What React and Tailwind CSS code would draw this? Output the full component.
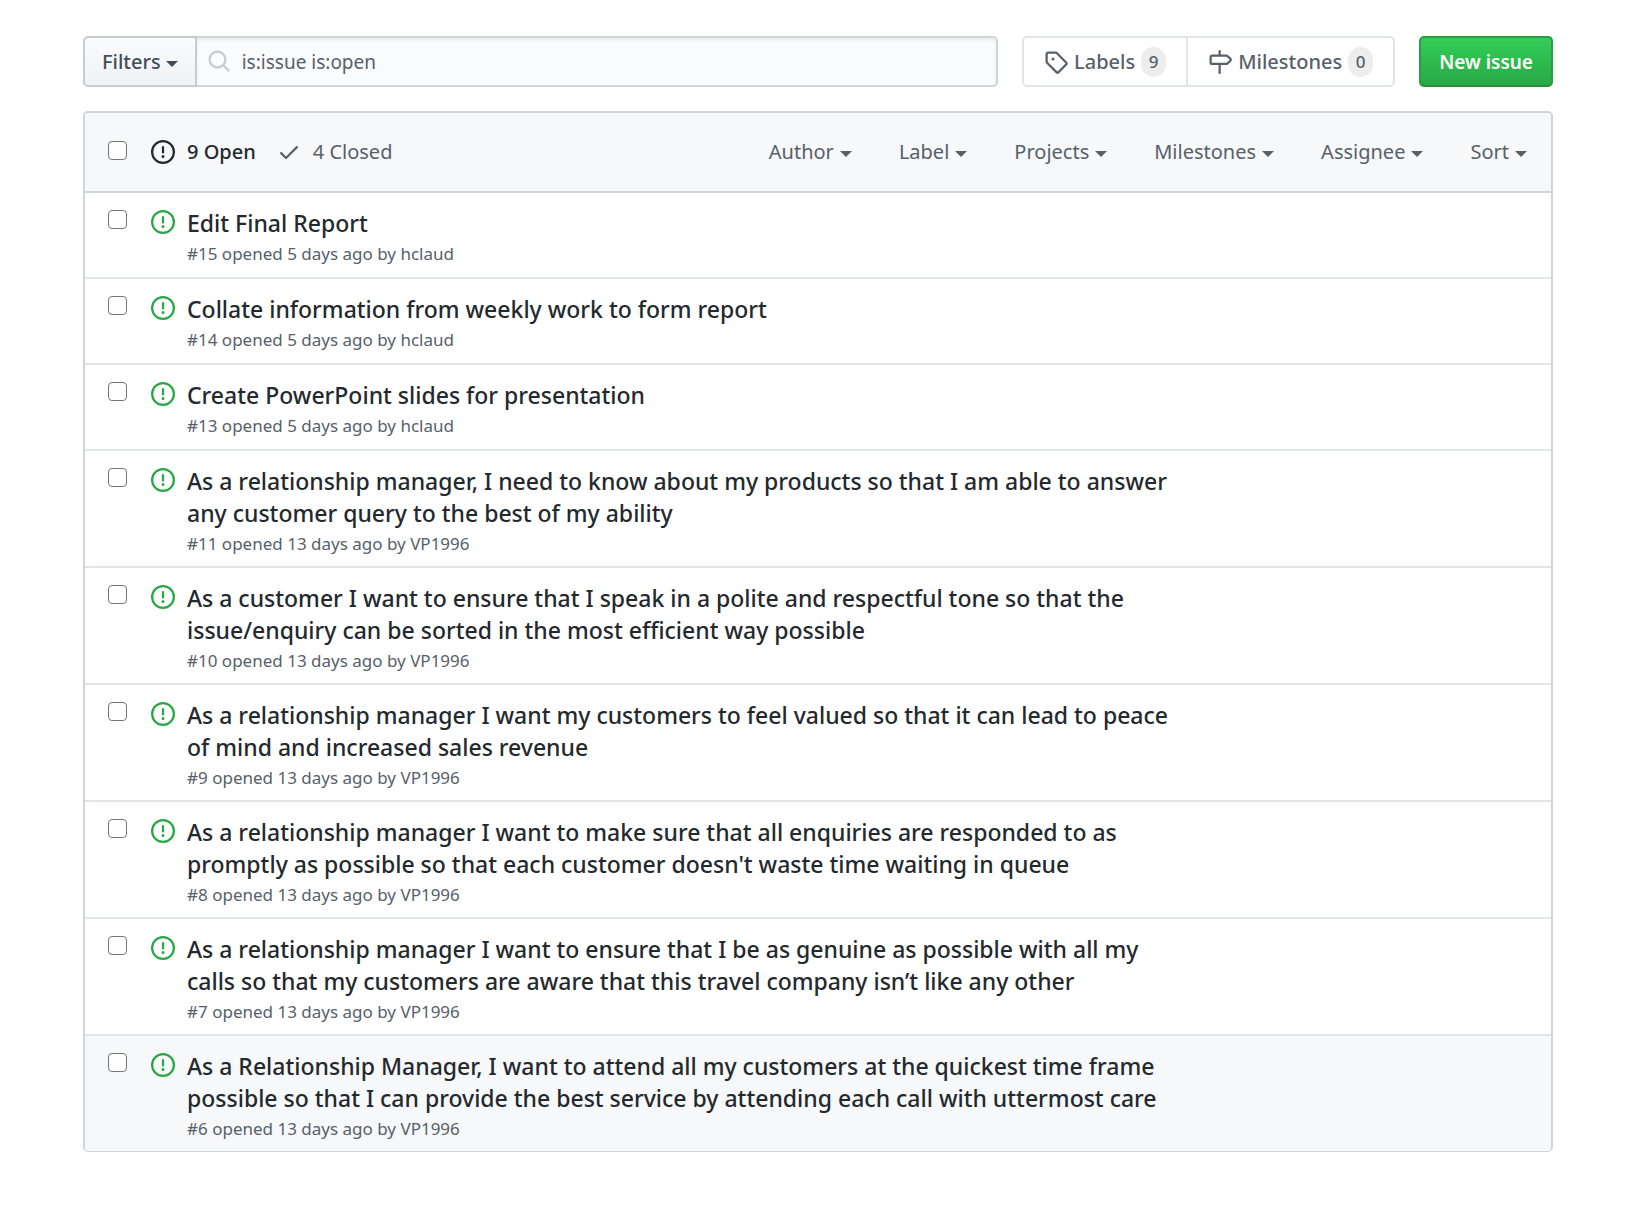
const ICONS = {
  issue:
    "M8 1.5a6.5 6.5 0 100 13 6.5 6.5 0 000-13zM0 8a8 8 0 1116 0A8 8 0 010 8zm9 3a1 1 0 11-2 0 1 1 0 012 0zm-.25-6.25a.75.75 0 00-1.5 0v3.5a.75.75 0 001.5 0v-3.5z",
  check:
    "M13.78 4.22a.75.75 0 010 1.06l-7.25 7.25a.75.75 0 01-1.06 0L2.22 9.28a.75.75 0 011.06-1.06L6 10.94l6.72-6.72a.75.75 0 011.06 0z",
  search:
    "M11.5 7a4.499 4.499 0 11-8.998 0A4.499 4.499 0 0111.5 7zm-.82 4.74a6 6 0 111.06-1.06l3.04 3.04a.75.75 0 11-1.06 1.06l-3.04-3.04z",
  tag: "M2.5 7.775V2.75a.25.25 0 01.25-.25h5.025a.25.25 0 01.177.073l6.25 6.25a.25.25 0 010 .354l-5.025 5.025a.25.25 0 01-.354 0l-6.25-6.25a.25.25 0 01-.073-.177zm-1.5 0V2.75C1 1.784 1.784 1 2.75 1h5.025c.464 0 .91.184 1.238.513l6.25 6.25a1.75 1.75 0 010 2.474l-5.026 5.026a1.75 1.75 0 01-2.474 0l-6.25-6.25A1.75 1.75 0 011 7.775zM6 5a1 1 0 100 2 1 1 0 000-2z",
  milestone:
    "M7.75 0a.75.75 0 01.75.75V3h3.634c.414 0 .814.147 1.13.414l2.07 1.75a1.75 1.75 0 010 2.672l-2.07 1.75a1.75 1.75 0 01-1.13.414H8.5v5.25a.75.75 0 11-1.5 0V10H2.75A1.75 1.75 0 011 8.25v-3.5C1 3.784 1.784 3 2.75 3H7V.75A.75.75 0 017.75 0zm0 8.5h4.384a.25.25 0 00.161-.06l2.07-1.75a.25.25 0 000-.38l-2.07-1.75a.25.25 0 00-.161-.06H2.75a.25.25 0 00-.25.25v3.5c0 .138.112.25.25.25h5z",
};

const MENUS = ["Author", "Label", "Projects", "Milestones", "Assignee", "Sort"];

const ISSUES = [
  { id: 15, days: 5, by: "hclaud", title: "Edit Final Report" },
  { id: 14, days: 5, by: "hclaud", title: "Collate information from weekly work to form report" },
  { id: 13, days: 5, by: "hclaud", title: "Create PowerPoint slides for presentation" },
  {
    id: 11,
    days: 13,
    by: "VP1996",
    title:
      "As a relationship manager, I need to know about my products so that I am able to answer any customer query to the best of my ability",
  },
  {
    id: 10,
    days: 13,
    by: "VP1996",
    title:
      "As a customer I want to ensure that I speak in a polite and respectful tone so that the issue/enquiry can be sorted in the most efficient way possible",
  },
  {
    id: 9,
    days: 13,
    by: "VP1996",
    title:
      "As a relationship manager I want my customers to feel valued so that it can lead to peace of mind and increased sales revenue",
  },
  {
    id: 8,
    days: 13,
    by: "VP1996",
    title:
      "As a relationship manager I want to make sure that all enquiries are responded to as promptly as possible so that each customer doesn't waste time waiting in queue",
  },
  {
    id: 7,
    days: 13,
    by: "VP1996",
    title:
      "As a relationship manager I want to ensure that I be as genuine as possible with all my calls so that my customers are aware that this travel company isn’t like any other",
  },
  {
    id: 6,
    days: 13,
    by: "VP1996",
    title:
      "As a Relationship Manager, I want to attend all my customers at the quickest time frame possible so that I can provide the best service by attending each call with uttermost care",
    hovered: true,
  },
];

function Icon({ name, className = "" }) {
  return (
    <svg viewBox="0 0 16 16" aria-hidden="true" fill="currentColor" fillRule="evenodd" className={`size-6 shrink-0 ${className}`}>
      <path d={ICONS[name]} />
    </svg>
  );
}

function Caret() {
  return <span aria-hidden="true" className="mt-1 border-x-6 border-t-6 border-x-transparent border-t-current" />;
}

function Checkbox({ label }) {
  return (
    <input
      type="checkbox"
      aria-label={label}
      className="size-[19px] shrink-0 appearance-none rounded-[4px] border border-[#767676] bg-white checked:bg-[#0366d6]"
    />
  );
}

function Counter({ children }) {
  return (
    <span className="flex h-[30px] min-w-[25px] items-center justify-center rounded-full bg-[#ededed] text-[17px]">
      {children}
    </span>
  );
}

function Toolbar() {
  return (
    <div className="flex h-[51px] gap-6">
      <form className="flex min-w-0 flex-1" onSubmit={(e) => e.preventDefault()}>
        <button
          type="button"
          className="flex items-center gap-[5px] rounded-l-[5px] border-2 border-[#c8ccd0] bg-linear-to-b from-[#fafbfc] to-[#eff3f6] bg-origin-border px-[17px] font-medium text-[#444d56]"
        >
          Filters
          <Caret />
        </button>
        <div className="relative min-w-0 flex-1">
          <Icon name="search" className="pointer-events-none absolute top-[13px] left-[10px] text-[#c6cbd1]" />
          <input
            type="text"
            aria-label="Search all issues"
            defaultValue="is:issue is:open"
            className="h-full w-full rounded-r-[5px] border-2 border-l-0 border-[#d1d5da] bg-[#fafbfc] pr-3 pl-[45px] text-[19px] text-[#586069] shadow-[inset_0_2px_3px_rgba(27,31,35,0.075)] outline-none"
          />
        </div>
      </form>
      <nav className="flex font-medium text-[#586069]">
        <a href="#labels" className="flex items-center gap-[6px] rounded-l-[5px] border-2 border-[#e1e4e8] px-[20px]">
          <Icon name="tag" />
          Labels
          <Counter>9</Counter>
        </a>
        <a
          href="#milestones"
          className="flex items-center gap-[6px] rounded-r-[5px] border-2 border-l-0 border-[#e1e4e8] px-[20px]"
        >
          <Icon name="milestone" />
          Milestones
          <Counter>0</Counter>
        </a>
      </nav>
      <button
        type="button"
        className="rounded-[5px] border-2 border-[#2a9e44] border-b-[#23903c] bg-linear-to-b from-[#34d058] to-[#28a745] bg-origin-border px-[18px] text-[19px] font-semibold text-white"
      >
        New issue
      </button>
    </div>
  );
}

function ListHeader() {
  return (
    <div className="flex items-center border-b-2 border-[#d1d5da] bg-[#f6f8fa] py-6 pr-6 pl-[23px] text-[#586069]">
      <div className="-mt-1 mr-6 flex">
        <Checkbox label="Select all issues" />
      </div>
      <a href="#open" className="flex items-center gap-3 font-medium text-[#24292e]">
        <Icon name="issue" />9 Open
      </a>
      <a href="#closed" className="ml-[21px] flex items-center gap-3">
        <Icon name="check" />4 Closed
      </a>
      <div className="ml-auto flex gap-[47px]">
        {MENUS.map((menu) => (
          <button key={menu} type="button" className="flex items-center gap-[6px]">
            {menu}
            <Caret />
          </button>
        ))}
      </div>
    </div>
  );
}

function IssueRow({ issue }) {
  return (
    <li
      className={`flex min-h-[86px] items-start border-b-2 border-[#e1e4e8] pr-6 pl-[23px] last:border-b-0 ${issue.hovered ? "bg-[#f6f8fa]" : "bg-white"}`}
    >
      <div className="flex pt-[17px]">
        <Checkbox label={`Select issue #${issue.id}`} />
      </div>
      <Icon name="issue" className="mt-[17px] ml-6 text-[#28a745]" />
      <div className="ml-3 min-w-0 max-w-[990px] pt-[14px] pb-[9px]">
        <a href={`#issue-${issue.id}`} className="block text-[23px] leading-8 font-medium text-[#24292e]">
          {issue.title}
        </a>
        <p className="mt-[1px] text-[17px] leading-[27px] text-[#586069]">
          #{issue.id} opened {issue.days} days ago by {issue.by}
        </p>
      </div>
    </li>
  );
}

export default function App() {
  return (
    <main className="bg-white pt-9 pr-[95px] pb-12 pl-[83px] font-['Noto_Sans','Open_Sans',sans-serif] text-[20px] leading-[30px]">
      <Toolbar />
      <section aria-label="Issues" className="mt-6 overflow-hidden rounded-[5px] border-2 border-b border-[#d1d5da]">
        <ListHeader />
        <ul>
          {ISSUES.map((issue) => (
            <IssueRow key={issue.id} issue={issue} />
          ))}
        </ul>
      </section>
    </main>
  );
}
